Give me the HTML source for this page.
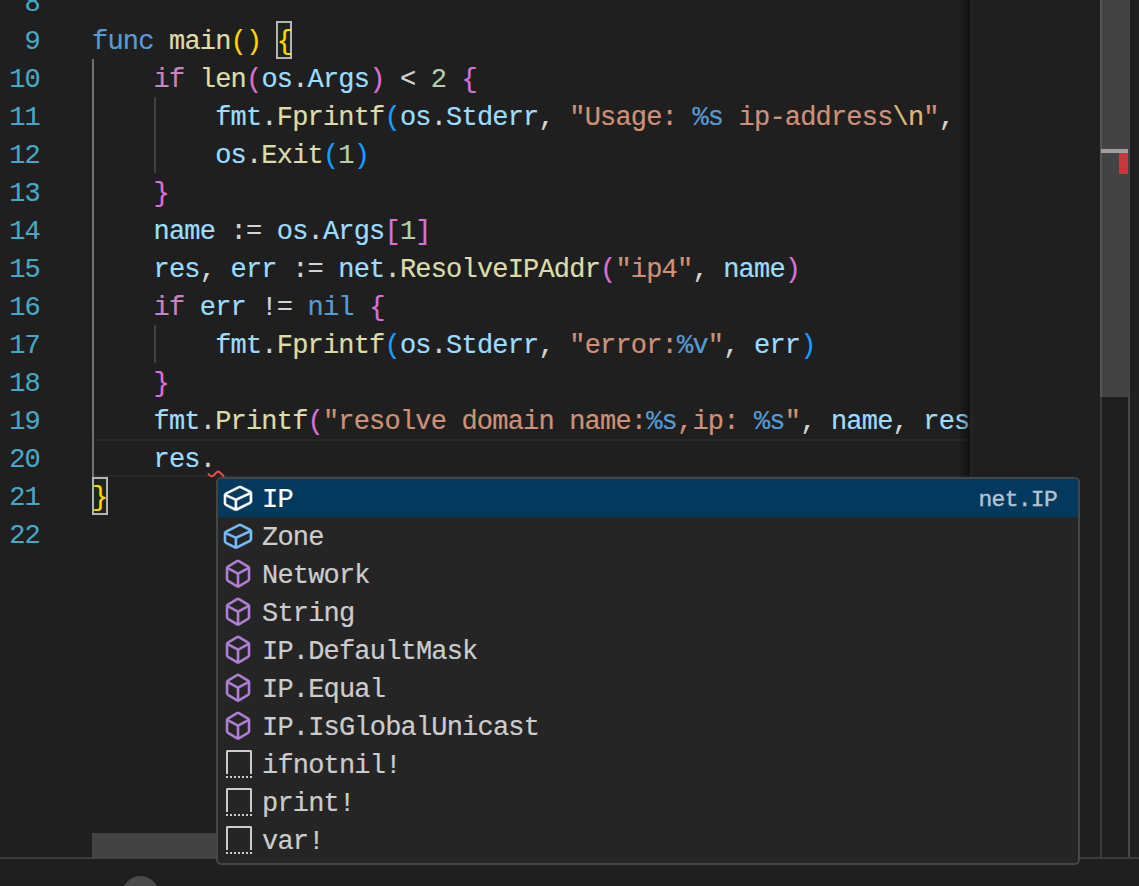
<!DOCTYPE html>
<html><head><meta charset="utf-8"><style>
*{margin:0;padding:0;box-sizing:border-box}
html,body{width:1139px;height:886px;overflow:hidden;background:#1f1f1f}
body{position:relative;font-family:"Liberation Mono",monospace}
.ln{position:absolute;left:0;width:40px;text-align:right;height:38px;line-height:38px;font-size:27px;letter-spacing:-0.81px;-webkit-text-stroke:0.15px currentColor;color:#48a8c4;white-space:pre}
.cl{position:absolute;left:92px;height:38px;line-height:38px;font-size:27px;letter-spacing:-0.81px;-webkit-text-stroke:0.2px currentColor;white-space:pre;color:#d4d4d4}
.ig{position:absolute;width:2px;background:#404040}
.iga{position:absolute;width:2px;background:#707070}
.bm{position:absolute;border:2px solid #b4b4b4;background:rgba(0,100,0,.1);width:16px;height:38px}
#code{position:absolute;left:0;top:0;width:970px;height:858px;overflow:hidden}
#sw{position:absolute;left:216px;top:477px;width:864px;height:388px;background:#252526;border:2px solid #454545;border-radius:5px;overflow:hidden}
.row{position:absolute;left:0;width:860px;height:38px;color:#cccccc}
.row.sel{background:#04395e;color:#fff}
.row svg{position:absolute;left:4px;top:3px;width:32px;height:32px}
.lbl{position:absolute;left:44px;top:2px;line-height:38px;font-size:27px;letter-spacing:-0.81px;-webkit-text-stroke:0.2px currentColor;white-space:pre}
.det{position:absolute;right:21px;top:2px;line-height:38px;font-size:22.95px;letter-spacing:-0.69px;-webkit-text-stroke:0.3px currentColor;white-space:pre;opacity:.7}
</style></head><body>
<div id="code">
<div style="position:absolute;left:94px;top:438.5px;width:876px;height:38px;border-top:2px solid #282828;border-bottom:2px solid #282828"></div>
<div class="iga" style="left:92px;top:58.5px;height:418px"></div>
<div class="ig" style="left:153.6px;top:96.5px;height:76px"></div>
<div class="ig" style="left:153.6px;top:324.5px;height:38px"></div>
<div class="bm" style="left:276px;top:20.5px"></div>
<div class="bm" style="left:92px;top:476.5px"></div>
<div class="ln" style="top:-15.0px">8</div>
<div class="ln" style="top:23.0px">9</div>
<div class="ln" style="top:61.0px">10</div>
<div class="ln" style="top:99.0px">11</div>
<div class="ln" style="top:137.0px">12</div>
<div class="ln" style="top:175.0px">13</div>
<div class="ln" style="top:213.0px">14</div>
<div class="ln" style="top:251.0px">15</div>
<div class="ln" style="top:289.0px">16</div>
<div class="ln" style="top:327.0px">17</div>
<div class="ln" style="top:365.0px">18</div>
<div class="ln" style="top:403.0px">19</div>
<div class="ln" style="top:441.0px">20</div>
<div class="ln" style="top:479.0px">21</div>
<div class="ln" style="top:517.0px">22</div>
<div class="cl" style="top:23.0px"><span style="color:#569cd6">func</span><span style="color:#d4d4d4"> </span><span style="color:#dcdcaa">main</span><span style="color:#ffd700">()</span><span style="color:#d4d4d4"> </span><span style="color:#ffd700">{</span></div>
<div class="cl" style="top:61.0px"><span style="color:#d4d4d4">    </span><span style="color:#c586c0">if</span><span style="color:#d4d4d4"> </span><span style="color:#dcdcaa">len</span><span style="color:#da70d6">(</span><span style="color:#9cdcfe">os</span><span style="color:#d4d4d4">.</span><span style="color:#9cdcfe">Args</span><span style="color:#da70d6">)</span><span style="color:#d4d4d4"> &lt; </span><span style="color:#b5cea8">2</span><span style="color:#d4d4d4"> </span><span style="color:#da70d6">{</span></div>
<div class="cl" style="top:99.0px"><span style="color:#d4d4d4">        </span><span style="color:#9cdcfe">fmt</span><span style="color:#d4d4d4">.</span><span style="color:#dcdcaa">Fprintf</span><span style="color:#179fff">(</span><span style="color:#9cdcfe">os</span><span style="color:#d4d4d4">.</span><span style="color:#9cdcfe">Stderr</span><span style="color:#d4d4d4">, </span><span style="color:#ce9178">&quot;Usage: </span><span style="color:#569cd6">%s</span><span style="color:#ce9178"> ip-address</span><span style="color:#d7ba7d">\n</span><span style="color:#ce9178">&quot;</span><span style="color:#d4d4d4">,</span></div>
<div class="cl" style="top:137.0px"><span style="color:#d4d4d4">        </span><span style="color:#9cdcfe">os</span><span style="color:#d4d4d4">.</span><span style="color:#dcdcaa">Exit</span><span style="color:#179fff">(</span><span style="color:#b5cea8">1</span><span style="color:#179fff">)</span></div>
<div class="cl" style="top:175.0px"><span style="color:#d4d4d4">    </span><span style="color:#da70d6">}</span></div>
<div class="cl" style="top:213.0px"><span style="color:#d4d4d4">    </span><span style="color:#9cdcfe">name</span><span style="color:#d4d4d4"> := </span><span style="color:#9cdcfe">os</span><span style="color:#d4d4d4">.</span><span style="color:#9cdcfe">Args</span><span style="color:#da70d6">[</span><span style="color:#b5cea8">1</span><span style="color:#da70d6">]</span></div>
<div class="cl" style="top:251.0px"><span style="color:#d4d4d4">    </span><span style="color:#9cdcfe">res</span><span style="color:#d4d4d4">, </span><span style="color:#9cdcfe">err</span><span style="color:#d4d4d4"> := </span><span style="color:#9cdcfe">net</span><span style="color:#d4d4d4">.</span><span style="color:#dcdcaa">ResolveIPAddr</span><span style="color:#da70d6">(</span><span style="color:#ce9178">&quot;ip4&quot;</span><span style="color:#d4d4d4">, </span><span style="color:#9cdcfe">name</span><span style="color:#da70d6">)</span></div>
<div class="cl" style="top:289.0px"><span style="color:#d4d4d4">    </span><span style="color:#c586c0">if</span><span style="color:#d4d4d4"> </span><span style="color:#9cdcfe">err</span><span style="color:#d4d4d4"> != </span><span style="color:#569cd6">nil</span><span style="color:#d4d4d4"> </span><span style="color:#da70d6">{</span></div>
<div class="cl" style="top:327.0px"><span style="color:#d4d4d4">        </span><span style="color:#9cdcfe">fmt</span><span style="color:#d4d4d4">.</span><span style="color:#dcdcaa">Fprintf</span><span style="color:#179fff">(</span><span style="color:#9cdcfe">os</span><span style="color:#d4d4d4">.</span><span style="color:#9cdcfe">Stderr</span><span style="color:#d4d4d4">, </span><span style="color:#ce9178">&quot;error:</span><span style="color:#569cd6">%v</span><span style="color:#ce9178">&quot;</span><span style="color:#d4d4d4">, </span><span style="color:#9cdcfe">err</span><span style="color:#179fff">)</span></div>
<div class="cl" style="top:365.0px"><span style="color:#d4d4d4">    </span><span style="color:#da70d6">}</span></div>
<div class="cl" style="top:403.0px"><span style="color:#d4d4d4">    </span><span style="color:#9cdcfe">fmt</span><span style="color:#d4d4d4">.</span><span style="color:#dcdcaa">Printf</span><span style="color:#da70d6">(</span><span style="color:#ce9178">&quot;resolve domain name:</span><span style="color:#569cd6">%s</span><span style="color:#ce9178">,ip: </span><span style="color:#569cd6">%s</span><span style="color:#ce9178">&quot;</span><span style="color:#d4d4d4">, </span><span style="color:#9cdcfe">name</span><span style="color:#d4d4d4">, </span><span style="color:#9cdcfe">res</span></div>
<div class="cl" style="top:441.0px"><span style="color:#d4d4d4">    </span><span style="color:#9cdcfe">res</span><span style="color:#d4d4d4">.</span></div>
<div class="cl" style="top:479.0px"><span style="color:#ffd700">}</span></div>
<svg style="position:absolute;left:200px;top:465px" width="30" height="15" viewBox="200 465 30 15"><path d="M208.5 474 Q211 477.5 213.5 475.5 L217 472 Q218.5 471 220 472.5 L223.5 476" fill="none" stroke="#f14c4c" stroke-width="2" stroke-linecap="round"/></svg>
</div>
<div style="position:absolute;left:958px;top:0;width:12px;height:858px;background:linear-gradient(to right,rgba(0,0,0,0),rgba(0,0,0,.45))"></div><div style="position:absolute;left:970px;top:0;width:3px;height:858px;background:rgba(255,255,255,.02)"></div>
<div style="position:absolute;left:1128px;top:0;width:2px;height:858px;background:#474747"></div>
<div style="position:absolute;left:1100px;top:0;width:30px;height:397px;background:#434343"></div>
<div style="position:absolute;left:1133px;top:0;width:6px;height:858px;background:rgba(255,255,255,.01)"></div>
<div style="position:absolute;left:1100px;top:0;width:1.5px;height:858px;background:rgba(127,127,127,.3)"></div>
<div style="position:absolute;left:1101px;top:149px;width:27px;height:4px;background:#a0a0a0"></div>
<div style="position:absolute;left:1119px;top:153px;width:9px;height:21px;background:#c8383a"></div>
<div style="position:absolute;left:0;top:857px;width:1139px;height:2px;background:#3c3c3c"></div>
<div style="position:absolute;left:92px;top:833px;width:980px;height:26px;background:#434343"></div>
<div style="position:absolute;left:122px;top:876px;width:37px;height:37px;border-radius:50%;background:#4a4a4a"></div>
<div id="sw">
<div class="row sel" style="top:0px"><svg viewBox="0 0 16 16"><path fill="#ffffff" stroke="#ffffff" stroke-width="0.3" stroke-linejoin="round" d="M14.45 4.5l-5-2.5h-.9l-7 3.5-.55.89v4.5l.55.9 5 2.5h.9l7-3.5.55-.9v-4.5l-.55-.89zm-8 8.64l-4.5-2.25V7.17l4.5 2v3.97zm.5-4.8L2.29 6.23l6.66-3.34 4.67 2.34-6.67 3.11zm7 1.55l-6.5 3.25V9.21l6.5-3v3.68z"/></svg><span class="lbl">IP</span><span class="det">net.IP</span></div>
<div class="row" style="top:38px"><svg viewBox="0 0 16 16"><path fill="#75beff" stroke="#75beff" stroke-width="0.3" stroke-linejoin="round" d="M14.45 4.5l-5-2.5h-.9l-7 3.5-.55.89v4.5l.55.9 5 2.5h.9l7-3.5.55-.9v-4.5l-.55-.89zm-8 8.64l-4.5-2.25V7.17l4.5 2v3.97zm.5-4.8L2.29 6.23l6.66-3.34 4.67 2.34-6.67 3.11zm7 1.55l-6.5 3.25V9.21l6.5-3v3.68z"/></svg><span class="lbl">Zone</span></div>
<div class="row" style="top:76px"><svg viewBox="0 0 16 16"><path fill="#b180d7" stroke="#b180d7" stroke-width="0.3" stroke-linejoin="round" d="M13.51 4l-5-3h-1l-5 3-.49.86v6l.49.85 5 3h1l5-3 .49-.85v-6L13.51 4zm-6 9.56l-4.5-2.7V5.7l4.5 2.450v5.41zM3.27 4.7l4.74-2.84 4.74 2.84-4.74 2.59L3.27 4.7zm9.740 6.16l-4.5 2.7V8.15l4.5-2.45v5.16z"/></svg><span class="lbl">Network</span></div>
<div class="row" style="top:114px"><svg viewBox="0 0 16 16"><path fill="#b180d7" stroke="#b180d7" stroke-width="0.3" stroke-linejoin="round" d="M13.51 4l-5-3h-1l-5 3-.49.86v6l.49.85 5 3h1l5-3 .49-.85v-6L13.51 4zm-6 9.56l-4.5-2.7V5.7l4.5 2.450v5.41zM3.27 4.7l4.74-2.84 4.74 2.84-4.74 2.59L3.27 4.7zm9.740 6.16l-4.5 2.7V8.15l4.5-2.45v5.16z"/></svg><span class="lbl">String</span></div>
<div class="row" style="top:152px"><svg viewBox="0 0 16 16"><path fill="#b180d7" stroke="#b180d7" stroke-width="0.3" stroke-linejoin="round" d="M13.51 4l-5-3h-1l-5 3-.49.86v6l.49.85 5 3h1l5-3 .49-.85v-6L13.51 4zm-6 9.56l-4.5-2.7V5.7l4.5 2.450v5.41zM3.27 4.7l4.74-2.84 4.74 2.84-4.74 2.59L3.27 4.7zm9.740 6.16l-4.5 2.7V8.15l4.5-2.45v5.16z"/></svg><span class="lbl">IP.DefaultMask</span></div>
<div class="row" style="top:190px"><svg viewBox="0 0 16 16"><path fill="#b180d7" stroke="#b180d7" stroke-width="0.3" stroke-linejoin="round" d="M13.51 4l-5-3h-1l-5 3-.49.86v6l.49.85 5 3h1l5-3 .49-.85v-6L13.51 4zm-6 9.56l-4.5-2.7V5.7l4.5 2.450v5.41zM3.27 4.7l4.74-2.84 4.74 2.84-4.74 2.59L3.27 4.7zm9.740 6.16l-4.5 2.7V8.15l4.5-2.45v5.16z"/></svg><span class="lbl">IP.Equal</span></div>
<div class="row" style="top:228px"><svg viewBox="0 0 16 16"><path fill="#b180d7" stroke="#b180d7" stroke-width="0.3" stroke-linejoin="round" d="M13.51 4l-5-3h-1l-5 3-.49.86v6l.49.85 5 3h1l5-3 .49-.85v-6L13.51 4zm-6 9.56l-4.5-2.7V5.7l4.5 2.450v5.41zM3.27 4.7l4.74-2.84 4.74 2.84-4.74 2.59L3.27 4.7zm9.740 6.16l-4.5 2.7V8.15l4.5-2.45v5.16z"/></svg><span class="lbl">IP.IsGlobalUnicast</span></div>
<div class="row" style="top:266px"><svg viewBox="0 0 16 16"><path fill="#cccccc" d="M2.5 1L2 1.5V13H3V2H14V13H15V1.5L14.5 1H2.5ZM2 15V14H3V15H2ZM5 14H4V15H5V14ZM6 14H7V15H6V14ZM9 14H8V15H9V14ZM10 14H11V15H10V14ZM15 15V14H14V15H15ZM12 14H13V15H12V14Z"/></svg><span class="lbl">ifnotnil!</span></div>
<div class="row" style="top:304px"><svg viewBox="0 0 16 16"><path fill="#cccccc" d="M2.5 1L2 1.5V13H3V2H14V13H15V1.5L14.5 1H2.5ZM2 15V14H3V15H2ZM5 14H4V15H5V14ZM6 14H7V15H6V14ZM9 14H8V15H9V14ZM10 14H11V15H10V14ZM15 15V14H14V15H15ZM12 14H13V15H12V14Z"/></svg><span class="lbl">print!</span></div>
<div class="row" style="top:342px"><svg viewBox="0 0 16 16"><path fill="#cccccc" d="M2.5 1L2 1.5V13H3V2H14V13H15V1.5L14.5 1H2.5ZM2 15V14H3V15H2ZM5 14H4V15H5V14ZM6 14H7V15H6V14ZM9 14H8V15H9V14ZM10 14H11V15H10V14ZM15 15V14H14V15H15ZM12 14H13V15H12V14Z"/></svg><span class="lbl">var!</span></div>
</div>
</body></html>
